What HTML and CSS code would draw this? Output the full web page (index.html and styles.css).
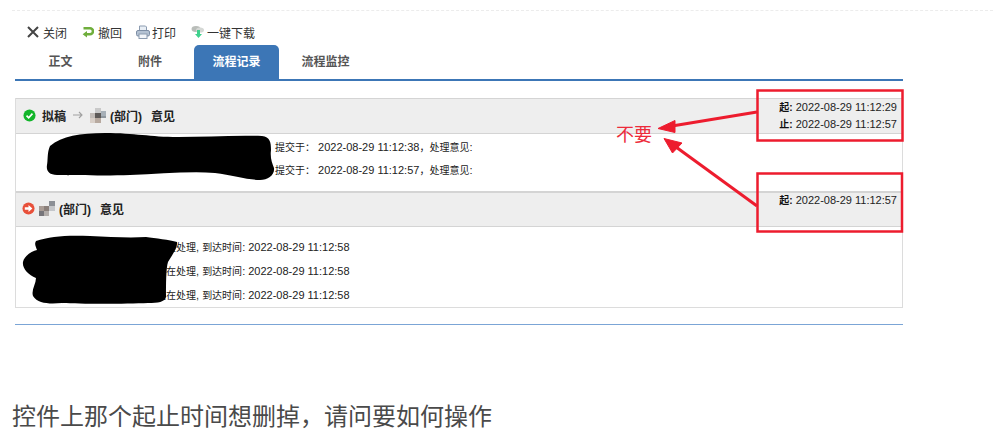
FILE: index.html
```html
<!DOCTYPE html>
<html lang="zh">
<head>
<meta charset="utf-8">
<title>流程记录</title>
<link rel="stylesheet" href="styles.css">
</head>
<body>
<div class="page">
  <div class="divider"></div>
  <div class="widget">
    <div class="toolbar">
      <span class="tool">
        <svg class="icon" viewBox="0 0 12 12"><path d="M1 1 11 11M11 1 1 11" fill="none" stroke="#444" stroke-width="2"/></svg>关闭
      </span>
      <span class="tool">
        <svg class="icon" viewBox="0 0 12 12"><path d="M1.500 2.200H8a3 3 0 0 1 0 6H3.500" fill="none" stroke="#6fae3c" stroke-width="2.600"/><path d="M5 5 .6 8.200 5 11.500z" fill="#6fae3c"/></svg>撤回
      </span>
      <span class="tool tool-print">
        <svg class="icon icon-wide" viewBox="0 0 14 14"><path d="M3.500 1h6l1 1v4h-7z" fill="#e8eef5" stroke="#8b9bb0"/><rect x="0.500" y="5.500" width="13" height="5.500" rx="1.500" fill="#b4c2d3" stroke="#7d8ea5"/><rect x="3" y="9" width="8" height="4.500" fill="#f3f6fa" stroke="#8b9bb0"/></svg>打印
      </span>
      <span class="tool tool-down">
        <svg class="icon icon-wide" viewBox="0 0 14 14"><ellipse cx="5" cy="4" rx="4.500" ry="3" fill="#b9bdb9"/><ellipse cx="9" cy="5" rx="4" ry="2.600" fill="#d5d8d5"/><path d="M6 5h3v4h2l-3.500 4L4 9h2z" fill="#3fd18d"/></svg>一键下载
      </span>
    </div>
    <div class="tabs">
      <span class="tab">正文</span>
      <span class="tab tab-shift3">附件</span>
      <span class="tab tab-active">流程记录</span>
      <span class="tab tab-shift2">流程监控</span>
    </div>
    <div class="panel">
      <section>
        <header class="head head-first">
          <div class="title">
            <svg class="status" viewBox="0 0 14 14"><circle cx="7" cy="7" r="6.500" fill="#12b52a"/><path d="M3.800 7.200 6.100 9.500 10.200 5" fill="none" stroke="#fff" stroke-width="1.800"/></svg>
            <span>拟稿</span>
            <svg class="arrow" viewBox="0 0 10 8"><path d="M0 4H9M6 1 9 4 6 7" fill="none" stroke="#a0a0a0" stroke-width="1.100"/></svg>
            <svg class="mosaic" viewBox="0 0 16 15"><rect x="5" y="0" width="6" height="5" fill="#c9c9c9"/><rect x="11" y="3" width="5" height="5" fill="#a7b0b8"/><rect x="0" y="5" width="5" height="5" fill="#c2bcb8"/><rect x="5" y="5" width="6" height="5" fill="#5e5a58"/><rect x="11" y="8" width="5" height="2" fill="#8f979e"/><rect x="0" y="10" width="5" height="5" fill="#d8cfc8"/><rect x="5" y="10" width="6" height="5" fill="#b7a99f"/></svg>
            <span class="dept">(部门)</span><span class="opinion">意见</span>
          </div>
          <div class="times">
            <div><b>起:</b> 2022-08-29 11:12:29</div>
            <div><b>止:</b> 2022-08-29 11:12:57</div>
          </div>
        </header>
        <div class="body body-first">
          <div class="row"><span class="zh">提交于：</span> 2022-08-29 11:12:38<span class="zh">，处理意见</span>:</div>
          <div class="row"><span class="zh">提交于：</span> 2022-08-29 11:12:57<span class="zh">，处理意见</span>:</div>
        </div>
      </section>
      <section>
        <header class="head head-second">
          <div class="title">
            <svg class="status status-run" viewBox="0 0 14 14"><circle cx="7" cy="7" r="6.500" fill="#e8503a"/><path d="M3 5.700H7V3.200L11.200 7 7 10.800V8.300H3z" fill="#fff"/></svg>
            <svg class="mosaic" viewBox="0 0 16 15"><rect x="10" y="0" width="6" height="5" fill="#8b8f96"/><rect x="5" y="5" width="5" height="5" fill="#8a7f7a"/><rect x="10" y="5" width="6" height="5" fill="#c4c6ca"/><rect x="0" y="5" width="5" height="5" fill="#a99c95"/><rect x="0" y="10" width="5" height="5" fill="#77757a"/><rect x="5" y="10" width="5" height="5" fill="#b3adaa"/></svg>
            <span class="dept">(部门)</span><span class="opinion">意见</span>
          </div>
          <div class="times">
            <div><b>起:</b> 2022-08-29 11:12:57</div>
          </div>
        </header>
        <div class="body body-second">
          <div class="row"><span class="zh">正在处理</span>, <span class="zh">到达时间</span>: 2022-08-29 11:12:58</div>
          <div class="row"><span class="zh">正在处理</span>, <span class="zh">到达时间</span>: 2022-08-29 11:12:58</div>
          <div class="row"><span class="zh">正在处理</span>, <span class="zh">到达时间</span>: 2022-08-29 11:12:58</div>
        </div>
      </section>
    </div>
    <div class="rule"></div>
  </div>
  <p class="question">控件上那个起止时间想删掉，请问要如何操作</p>

  <svg class="markup" viewBox="0 0 993 440" aria-hidden="true">
    <path d="M50 146C62 136 80 133 105 133C135 133 150 137 178 137C205 137 235 135 262 136C270 137 271 142 271 150C270 158 272 163 274 168C275 175 268 180 260 180C248 180 232 175 215 173C190 171 160 174 130 175C105 176 75 175 57 175C49 175 46 171 47 165C48 161 47 152 50 146Z" fill="#000"/>
    <path d="M36 241C50 236 68 235 90 236C110 237 130 238 146 237C155 238 170 240 177 242C178 248 172 255 168 262C166 268 166 285 166 297C165 302 158 303 148 303C125 304 80 304 62 303C50 304 38 304 33 296C31 290 36 284 36 278C28 275 22 268 23 262C24 256 32 251 37 250C36 247 34 244 36 241Z" fill="#000"/>
    <rect x="757.500" y="90.500" width="145" height="50" fill="none" stroke="#ed1c2e" stroke-width="2.500"/>
    <rect x="757.500" y="173.500" width="144.500" height="58" fill="none" stroke="#ed1c2e" stroke-width="2.500"/>
    <path d="M757 112 672 126" stroke="#ed1c2e" stroke-width="3" fill="none"/>
    <path d="M658 128.500 675 120.500 675 132.500z" fill="#ed1c2e" stroke="#ed1c2e"/>
    <path d="M757 206 676 147" stroke="#ed1c2e" stroke-width="3" fill="none"/>
    <path d="M664 138.500 682 143 672.500 153z" fill="#ed1c2e" stroke="#ed1c2e"/>
  </svg>
  <span class="note">不要</span>
</div>
</body>
</html>
```
FILE: styles.css
```css
* { box-sizing: border-box; }

html, body {
  margin: 0;
  padding: 0;
  background: #fff;
}

body {
  font-family: "Liberation Sans", "Noto Sans CJK SC", sans-serif;
  font-size: 11px;
  color: #222;
  overflow: hidden;
}

.page {
  position: relative;
  width: 993px;
  height: 440px;
  padding-top: 10px;
}

.divider {
  margin-left: 12px;
  border-top: 1px dashed #ececec;
}

.widget {
  margin-left: 15px;
  width: 888px;
}

.toolbar {
  display: flex;
  align-items: center;
  height: 16px;
  margin-top: 13px;
  padding-left: 12px;
  font-size: 12px;
  color: #333;
}

.tool {
  display: flex;
  align-items: center;
  gap: 4px;
  margin-right: 15px;
  white-space: nowrap;
}

.tool-print { margin-left: -1px; gap: 2px; }
.tool-down { gap: 2px; }

.icon { width: 12px; height: 12px; flex: none; }
.icon-wide { width: 14px; height: 14px; }

.tabs {
  display: flex;
  gap: 3px;
  height: 36px;
  margin-top: 5px;
  padding-left: 3px;
  border-bottom: 2px solid #3c76b6;
}

.tab {
  width: 85px;
  height: 34px;
  line-height: 35px;
  text-align: center;
  font-size: 12px;
  font-weight: 700;
  color: #555;
  border-radius: 5px 5px 0 0;
}

.tab-shift3 { padding-left: 3px; }
.tab-shift2 { padding-left: 2px; }

.tab-active {
  background: #3c76b6;
  color: #fff;
}

.panel {
  margin-top: 17px;
  height: 210px;
  border: 1px solid #dcdcdc;
  border-top: 0;
}

.head {
  display: flex;
  justify-content: space-between;
  background: #eee;
  border-top: 1px solid #d4d4d4;
  border-bottom: 1px solid #d4d4d4;
}

.head-first { height: 36px; }
.head-second { height: 36px; border-top-width: 2px; }

.title {
  display: flex;
  align-items: center;
  padding: 0 0 2px 7px;
  font-size: 12px;
  font-weight: 700;
  color: #222;
}

.head-second .title { padding-left: 6px; }

.status { width: 13px; height: 13px; flex: none; margin-right: 6px; }
.status-run { margin-right: 4px; }
.arrow { width: 10px; height: 8px; flex: none; margin: 0 7px; }
.mosaic { width: 16px; height: 15px; flex: none; }
.dept { margin-left: 4px; }
.opinion { margin-left: 9px; }

.times {
  padding-right: 5px;
  line-height: 17px;
  text-align: right;
  color: #222;
}

.head-second .times { line-height: 14px; }

.times b { color: #111; font-size: 10px; }

.zh { font-size: 10px; }

.body-first { height: 57px; padding: 1px 0 0 259px; }
.body-second { padding: 8px 0 0 140px; }

.row {
  height: 24px;
  line-height: 24px;
  white-space: nowrap;
}

.body-first .row { height: 23px; }

.rule {
  margin-top: 16px;
  border-top: 1px solid #7ba5d6;
}

.question {
  margin: 73px 0 0 12px;
  font-size: 24px;
  line-height: 34px;
  font-family: "Noto Sans CJK SC", sans-serif;
  color: #4a4a4a;
}

.markup {
  position: absolute;
  left: 0;
  top: 0;
  width: 993px;
  height: 440px;
  pointer-events: none;
}

.note {
  position: absolute;
  left: 616px;
  top: 120px;
  font-family: "Noto Sans CJK SC", sans-serif;
  font-size: 18px;
  line-height: 26px;
  color: #ed2a3a;
}
```
